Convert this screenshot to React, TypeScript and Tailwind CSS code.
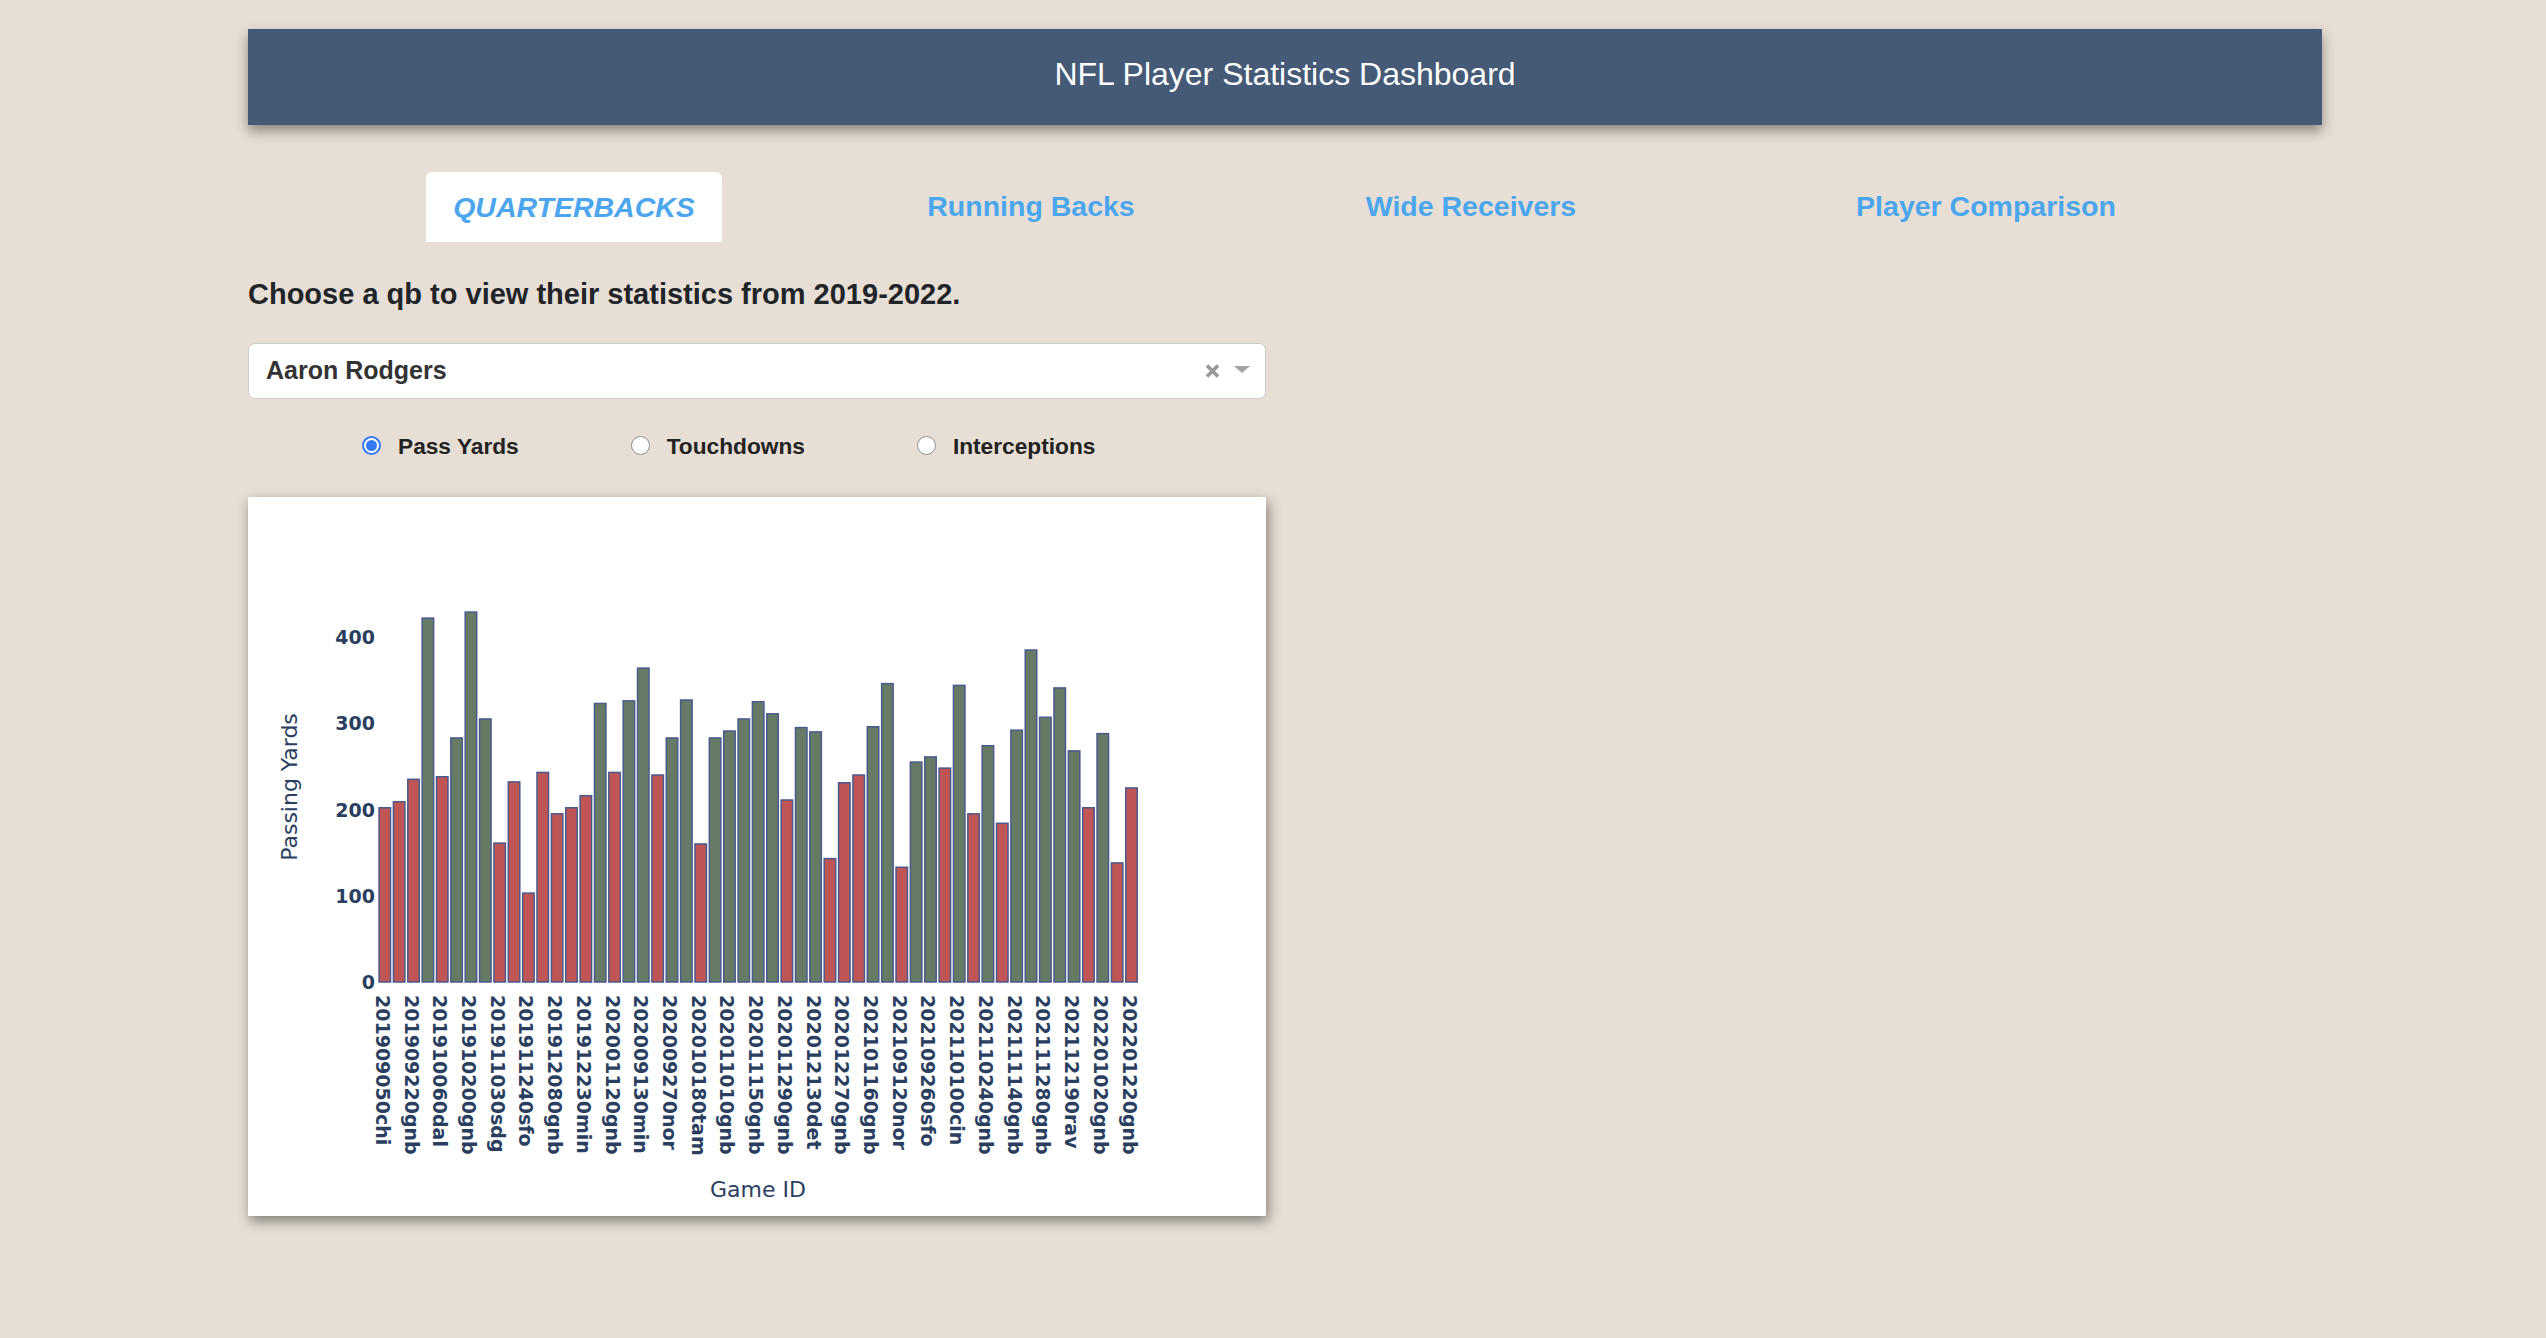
const yards = [
  203, 210, 236, 423, 239, 284, 430, 306, 162, 233, 104, 244, 196, 203, 217, 324, 244, 327,
  365, 241, 284, 328, 161, 284, 292, 306, 326, 312, 212, 296, 291, 144, 232, 241, 297, 347,
  134, 256, 262, 249, 345, 196, 275, 185, 293, 386, 308, 342, 269, 203, 289, 139, 226,
];

// only every other game id is shown on the axis
const tickGames = [
  "201909050chi", "201909220gnb", "201910060dal", "201910200gnb", "201911030sdg",
  "201911240sfo", "201912080gnb", "201912230min", "202001120gnb", "202009130min",
  "202009270nor", "202010180tam", "202011010gnb", "202011150gnb", "202011290gnb",
  "202012130det", "202012270gnb", "202101160gnb", "202109120nor", "202109260sfo",
  "202110100cin", "202110240gnb", "202111140gnb", "202111280gnb", "202112190rav",
  "202201020gnb", "202201220gnb",
];

const X0 = 130.3;
const STEP = 14.36;
const Y0 = 485;
const PX = 0.862;
const AXIS = "#2a3f5f";

const PassingChart = () => {
  return (
    <svg width={1018} height={719} className="block">
      {[0, 100, 200, 300, 400].map((t) => (
        <text
          key={t}
          x={127}
          y={Y0 - t * PX}
          textAnchor="end"
          dominantBaseline="central"
          fontFamily="DejaVu Sans, Verdana, sans-serif"
          fontWeight="bold"
          fontSize={19}
          fill={AXIS}
        >
          {t}
        </text>
      ))}

      {yards.map((v, i) => (
        <rect
          key={i}
          x={X0 + i * STEP + 0.75}
          y={Y0 - v * PX + 0.75}
          width={11.5}
          height={v * PX - 0.75}
          fill={v >= 250 ? "#667a66" : "#c05555"}
          stroke="#4a5a8c"
          strokeWidth={1.5}
        />
      ))}

      {tickGames.map((g, j) => (
        <text
          key={g}
          transform={`translate(${X0 + j * 2 * STEP + 4.5} 498) rotate(90)`}
          textAnchor="start"
          dominantBaseline="central"
          fontFamily="DejaVu Sans, Verdana, sans-serif"
          fontWeight="bold"
          fontSize={19}
          fill={AXIS}
        >
          {g}
        </text>
      ))}

      <text
        transform="translate(41 290) rotate(-90)"
        textAnchor="middle"
        dominantBaseline="central"
        fontFamily="DejaVu Sans, Verdana, sans-serif"
        fontSize={22}
        fill={AXIS}
      >
        Passing Yards
      </text>
      <text
        x={510}
        y={692}
        textAnchor="middle"
        dominantBaseline="central"
        fontFamily="DejaVu Sans, Verdana, sans-serif"
        fontSize={22}
        fill={AXIS}
      >
        Game ID
      </text>
    </svg>
  );
};

const Radio = ({ label, checked }: { label: string; checked?: boolean }) => {
  return (
    <div className="flex items-center gap-[17px]">
      {checked ? (
        <div className="w-[19px] h-[19px] rounded-full border-[2px] border-[#3579f6] bg-white flex items-center justify-center">
          <div className="w-[11px] h-[11px] rounded-full bg-[#3579f6]" />
        </div>
      ) : (
        <div className="w-[19px] h-[19px] rounded-full border border-[#8e8e8e] bg-white" />
      )}
      <span className="text-[22.7px] font-bold text-[#222]">{label}</span>
    </div>
  );
};

const App = () => {
  return (
    <div className="min-h-screen bg-[#e7dfd5] pt-[29px] pl-[248px] font-['Liberation_Sans',Arial,sans-serif]">
      <div className="w-[2074px] h-[96px] bg-[#455a76] shadow-[0_6px_12px_rgba(0,0,0,0.4)] flex items-center justify-center pb-[6px]">
        <h1 className="text-[32px] text-white">NFL Player Statistics Dashboard</h1>
      </div>

      <div className="mt-[47px] w-[2074px] h-[70px] flex border-b border-[#e2dfdb] text-[28.5px] font-bold text-[#4ba6ee]">
        <div className="ml-[178px] w-[296px] h-[70px] bg-white rounded-t-[6px] flex items-center justify-center italic">
          QUARTERBACKS
        </div>
        <div className="ml-[161px] w-[296px] flex items-center justify-center">Running Backs</div>
        <div className="ml-[144px] w-[296px] flex items-center justify-center">Wide Receivers</div>
        <div className="ml-[219px] w-[296px] flex items-center justify-center">Player Comparison</div>
      </div>

      <div className="w-[1018px]">
        <p className="mt-[35px] text-[29px] leading-[1.2] font-bold text-[#212529]">
          Choose a qb to view their statistics from 2019-2022.
        </p>

        <div className="mt-[31px] h-[56px] bg-white border border-[#cccccc] rounded-[7px] flex items-center pl-[17px] pr-[15px]">
          <span className="flex-1 text-[25px] font-bold text-[#333]">Aaron Rodgers</span>
          <svg width="15" height="14" viewBox="0 0 15 14" className="mr-[14px]">
            <path d="M2 1.5 L13 12.5 M13 1.5 L2 12.5" stroke="#999" strokeWidth="3.6" strokeLinecap="butt" />
          </svg>
          <svg width="16" height="8" viewBox="0 0 16 8" className="mb-[1px]">
            <path d="M0 0 L16 0 L8 7 Z" fill="#a3a3a3" />
          </svg>
        </div>

        <div className="mt-[32px] h-[30px] flex items-center pl-[114px] gap-[112px]">
          <Radio label="Pass Yards" checked />
          <Radio label="Touchdowns" />
          <Radio label="Interceptions" />
        </div>

        <div className="mt-[36px] bg-white shadow-[2px_5px_12px_rgba(0,0,0,0.45)]">
          <PassingChart />
        </div>
      </div>
    </div>
  );
};

export default App;
